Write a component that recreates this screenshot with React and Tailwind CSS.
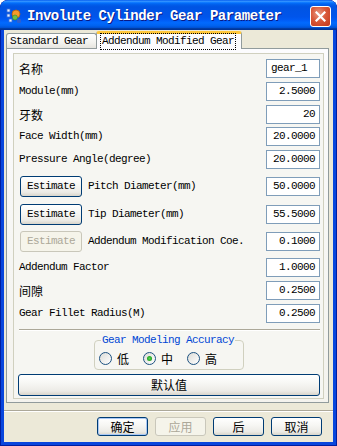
import React from "react";

const mono = "font-['Liberation_Mono','Noto_Sans_CJK_SC',monospace] text-[11px] tracking-[-0.6px] leading-none";
const cjk = "font-['Noto_Sans_CJK_SC',sans-serif] text-[12px] leading-none";
const xpBtn =
  "border border-[#003c74] rounded-[3px] bg-[linear-gradient(to_bottom,#ffffff_0%,#f7f7f4_40%,#ecebe6_80%,#d8d5cb_100%)] flex items-center justify-center text-black";
const xpBtnDisabled =
  "border border-[#c9c7ba] rounded-[3px] bg-[#f5f4ea] flex items-center justify-center text-[#aca899]";

function Field({ value, left }) {
  return (
    <div
      className={`w-[54px] h-[19px] border border-[#7f9db9] bg-white flex items-center px-[4px] ${
        left ? "justify-start" : "justify-end"
      }`}
    >
      <span className={mono}>{value}</span>
    </div>
  );
}

function Label({ text, zh }) {
  return <span className={`pl-[1px] text-black ${zh ? cjk : mono}`}>{text}</span>;
}

function Row({ label, zh, value, left, mt }) {
  return (
    <div className={`flex items-center justify-between h-[19px] ${mt}`}>
      <Label text={label} zh={zh} />
      <Field value={value} left={left} />
    </div>
  );
}

function EstRow({ label, value, disabled, mt }) {
  return (
    <div className={`flex items-center h-[21px] ${mt}`}>
      <div className={`ml-[2px] w-[62px] h-[21px] ${disabled ? xpBtnDisabled : xpBtn}`}>
        <span className={mono}>Estimate</span>
      </div>
      <span className={`ml-[6px] ${mono}`}>{label}</span>
      <div className="ml-auto">
        <Field value={value} />
      </div>
    </div>
  );
}

function Radio({ checked, label }) {
  return (
    <div className="flex items-center gap-[5px]">
      <div className="w-[13px] h-[13px] rounded-full border border-[#1c5180] bg-[linear-gradient(135deg,#dcdcd7_0%,#ffffff_100%)] flex items-center justify-center">
        {checked && (
          <div className="w-[5px] h-[5px] rounded-full bg-[radial-gradient(circle,#55d94f_0%,#21a121_70%,#1a8a1a_100%)]" />
        )}
      </div>
      <span className={cjk}>{label}</span>
    </div>
  );
}

function AppIcon() {
  return (
    <svg width="16" height="16" viewBox="0 0 16 16">
      <rect x="1" y="1" width="3" height="3" fill="#e8f0ff" stroke="#3a6fd8" strokeWidth="0.8" />
      <rect x="1" y="6" width="3" height="3" fill="#e8f0ff" stroke="#3a6fd8" strokeWidth="0.8" />
      <rect x="3" y="11" width="3" height="3" fill="#e8f0ff" stroke="#3a6fd8" strokeWidth="0.8" />
      <circle cx="10" cy="6" r="4" fill="#f59a2a" stroke="#b45f10" strokeWidth="0.8" />
      <circle cx="9" cy="9.5" r="2.5" fill="#6cc04a" stroke="#3a8a20" strokeWidth="0.6" />
      <rect x="11" y="11" width="4" height="4" rx="1" fill="#2d5fd0" />
    </svg>
  );
}

export default function App() {
  return (
    <div className="w-[337px] h-[446px] bg-white">
      <div className="w-[337px] h-[446px] rounded-t-[8px] bg-[#0846dd] shadow-[inset_1px_0_0_#001ea0,inset_-1px_0_0_#001ea0,inset_0_-1px_0_#001ea0] flex flex-col overflow-hidden">
        {/* Title bar */}
        <div className="h-[30px] flex items-center rounded-t-[8px] bg-[linear-gradient(to_bottom,#0058ee_0%,#3593ff_4%,#288eff_6%,#127dff_8%,#036ffc_10%,#0262ee_14%,#0057e5_20%,#0054e3_24%,#0055eb_56%,#005bf5_66%,#026afe_76%,#0062ef_86%,#0052d6_92%,#0040ab_94%,#003092_100%)]">
          <div className="ml-[6px] mt-[1px] w-[16px] h-[16px]">
            <AppIcon />
          </div>
          <span className="ml-[5px] mt-[1px] text-white font-bold font-['Liberation_Mono',monospace] text-[14px] tracking-[-0.45px] leading-none [text-shadow:1px_1px_0_#0a1883]">
            Involute Cylinder Gear Parameter
          </span>
          <div className="ml-auto mr-[6px] mt-[2px] w-[21px] h-[21px] rounded-[3px] border border-white bg-[radial-gradient(circle_at_40%_35%,#e89a84_0%,#d9593a_45%,#c2361a_100%)] flex items-center justify-center">
            <svg width="11" height="11" viewBox="0 0 11 11">
              <path d="M1.5 1.5 L9.5 9.5 M9.5 1.5 L1.5 9.5" stroke="white" strokeWidth="2.2" strokeLinecap="square" />
            </svg>
          </div>
        </div>

        {/* Body */}
        <div className="mx-[4px] mb-[4px] flex-1 bg-[#ece9d8] flex flex-col">
          {/* Tabs */}
          <div className="h-[18px] flex items-end pl-[2px] relative z-10">
            <div className="w-[91px] h-[15px] border border-b-0 border-[#919b9c] rounded-t-[3px] bg-[linear-gradient(to_bottom,#ffffff_0%,#f3f3ef_60%,#e6e5df_100%)] flex items-center pl-[3px]">
              <span className={mono}>Standard Gear</span>
            </div>
            <div className="-ml-[1px] w-[146px] h-[18px] -mb-[1px] border-x border-[#919b9c] border-t-[3px] border-t-[#ffc83c] rounded-t-[3px] bg-[#fcfcfe] flex items-center pl-[3px] pb-[1px]">
              <span className={`${mono} border border-dotted border-black px-[1px] py-[2px]`}>Addendum Modified Gear</span>
            </div>
          </div>

          {/* Panel */}
          <div className="ml-[2px] w-[323px] h-[355px] border border-[#919b9c] bg-[linear-gradient(to_bottom,#fcfcfe_0%,#f6f6f3_60%,#f4f3ee_100%)] pt-[4px] pb-[3px] pl-[6px] pr-[4px] flex flex-col">
            <div className="flex-1 border border-[#d0d0bf] bg-[#f6f6f2] pt-[5px] pl-[4px] pr-[3px] pb-[2px] flex flex-col">
              <Row label="名称" zh value="gear_1" left mt="" />
              <Row label="Module(mm)" value="2.5000" mt="mt-[4px]" />
              <Row label="牙数" zh value="20" mt="mt-[4px]" />
              <Row label="Face Width(mm)" value="20.0000" mt="mt-[3px]" />
              <Row label="Pressure Angle(degree)" value="20.0000" mt="mt-[4px]" />
              <EstRow label="Pitch Diameter(mm)" value="50.0000" mt="mt-[7px]" />
              <EstRow label="Tip Diameter(mm)" value="55.5000" mt="mt-[7px]" />
              <EstRow label="Addendum Modification Coe." value="0.1000" disabled mt="mt-[6px]" />
              <Row label="Addendum Factor" value="1.0000" mt="mt-[6px]" />
              <Row label="间隙" zh value="0.2500" mt="mt-[4px]" />
              <Row label="Gear Fillet Radius(M)" value="0.2500" mt="mt-[4px]" />

              <div className="mt-[6px] ml-[1px] w-[301px] h-[1px] bg-[#aca899] shadow-[0_1px_0_#ffffff]" />

              <fieldset className="mt-[4px] mx-auto w-[150px] border border-[#d0d0bf] rounded-[4px] px-[4px] pt-[6px] pb-[4px]">
                <legend className="ml-[2px] px-[1px] text-[#0046d5] font-['Liberation_Mono',monospace] text-[11px] tracking-[-0.6px] leading-[12px]">
                  Gear Modeling Accuracy
                </legend>
                <div className="flex items-center gap-[14px] h-[13px]">
                  <Radio label="低" />
                  <Radio label="中" checked />
                  <Radio label="高" />
                </div>
              </fieldset>

              <div className={`mt-[4px] w-[302px] h-[22px] ${xpBtn}`}>
                <span className={cjk}>默认值</span>
              </div>
            </div>
          </div>

          {/* Separator */}
          <div className="mt-[7px] h-[1px] bg-[#aca899]" />
          <div className="h-[1px] bg-white" />

          {/* Buttons */}
          <div className="mt-[5px] flex justify-end gap-[7px] pr-[11px]">
            <div className={`w-[51px] h-[19px] ${xpBtn} shadow-[inset_0_0_0_1px_#a9c8f5]`}>
              <span className={cjk}>确定</span>
            </div>
            <div className={`w-[51px] h-[19px] ${xpBtnDisabled}`}>
              <span className={cjk}>应用</span>
            </div>
            <div className={`w-[51px] h-[19px] ${xpBtn}`}>
              <span className={cjk}>后</span>
            </div>
            <div className={`w-[51px] h-[19px] ${xpBtn}`}>
              <span className={cjk}>取消</span>
            </div>
          </div>
        </div>
      </div>
    </div>
  );
}
